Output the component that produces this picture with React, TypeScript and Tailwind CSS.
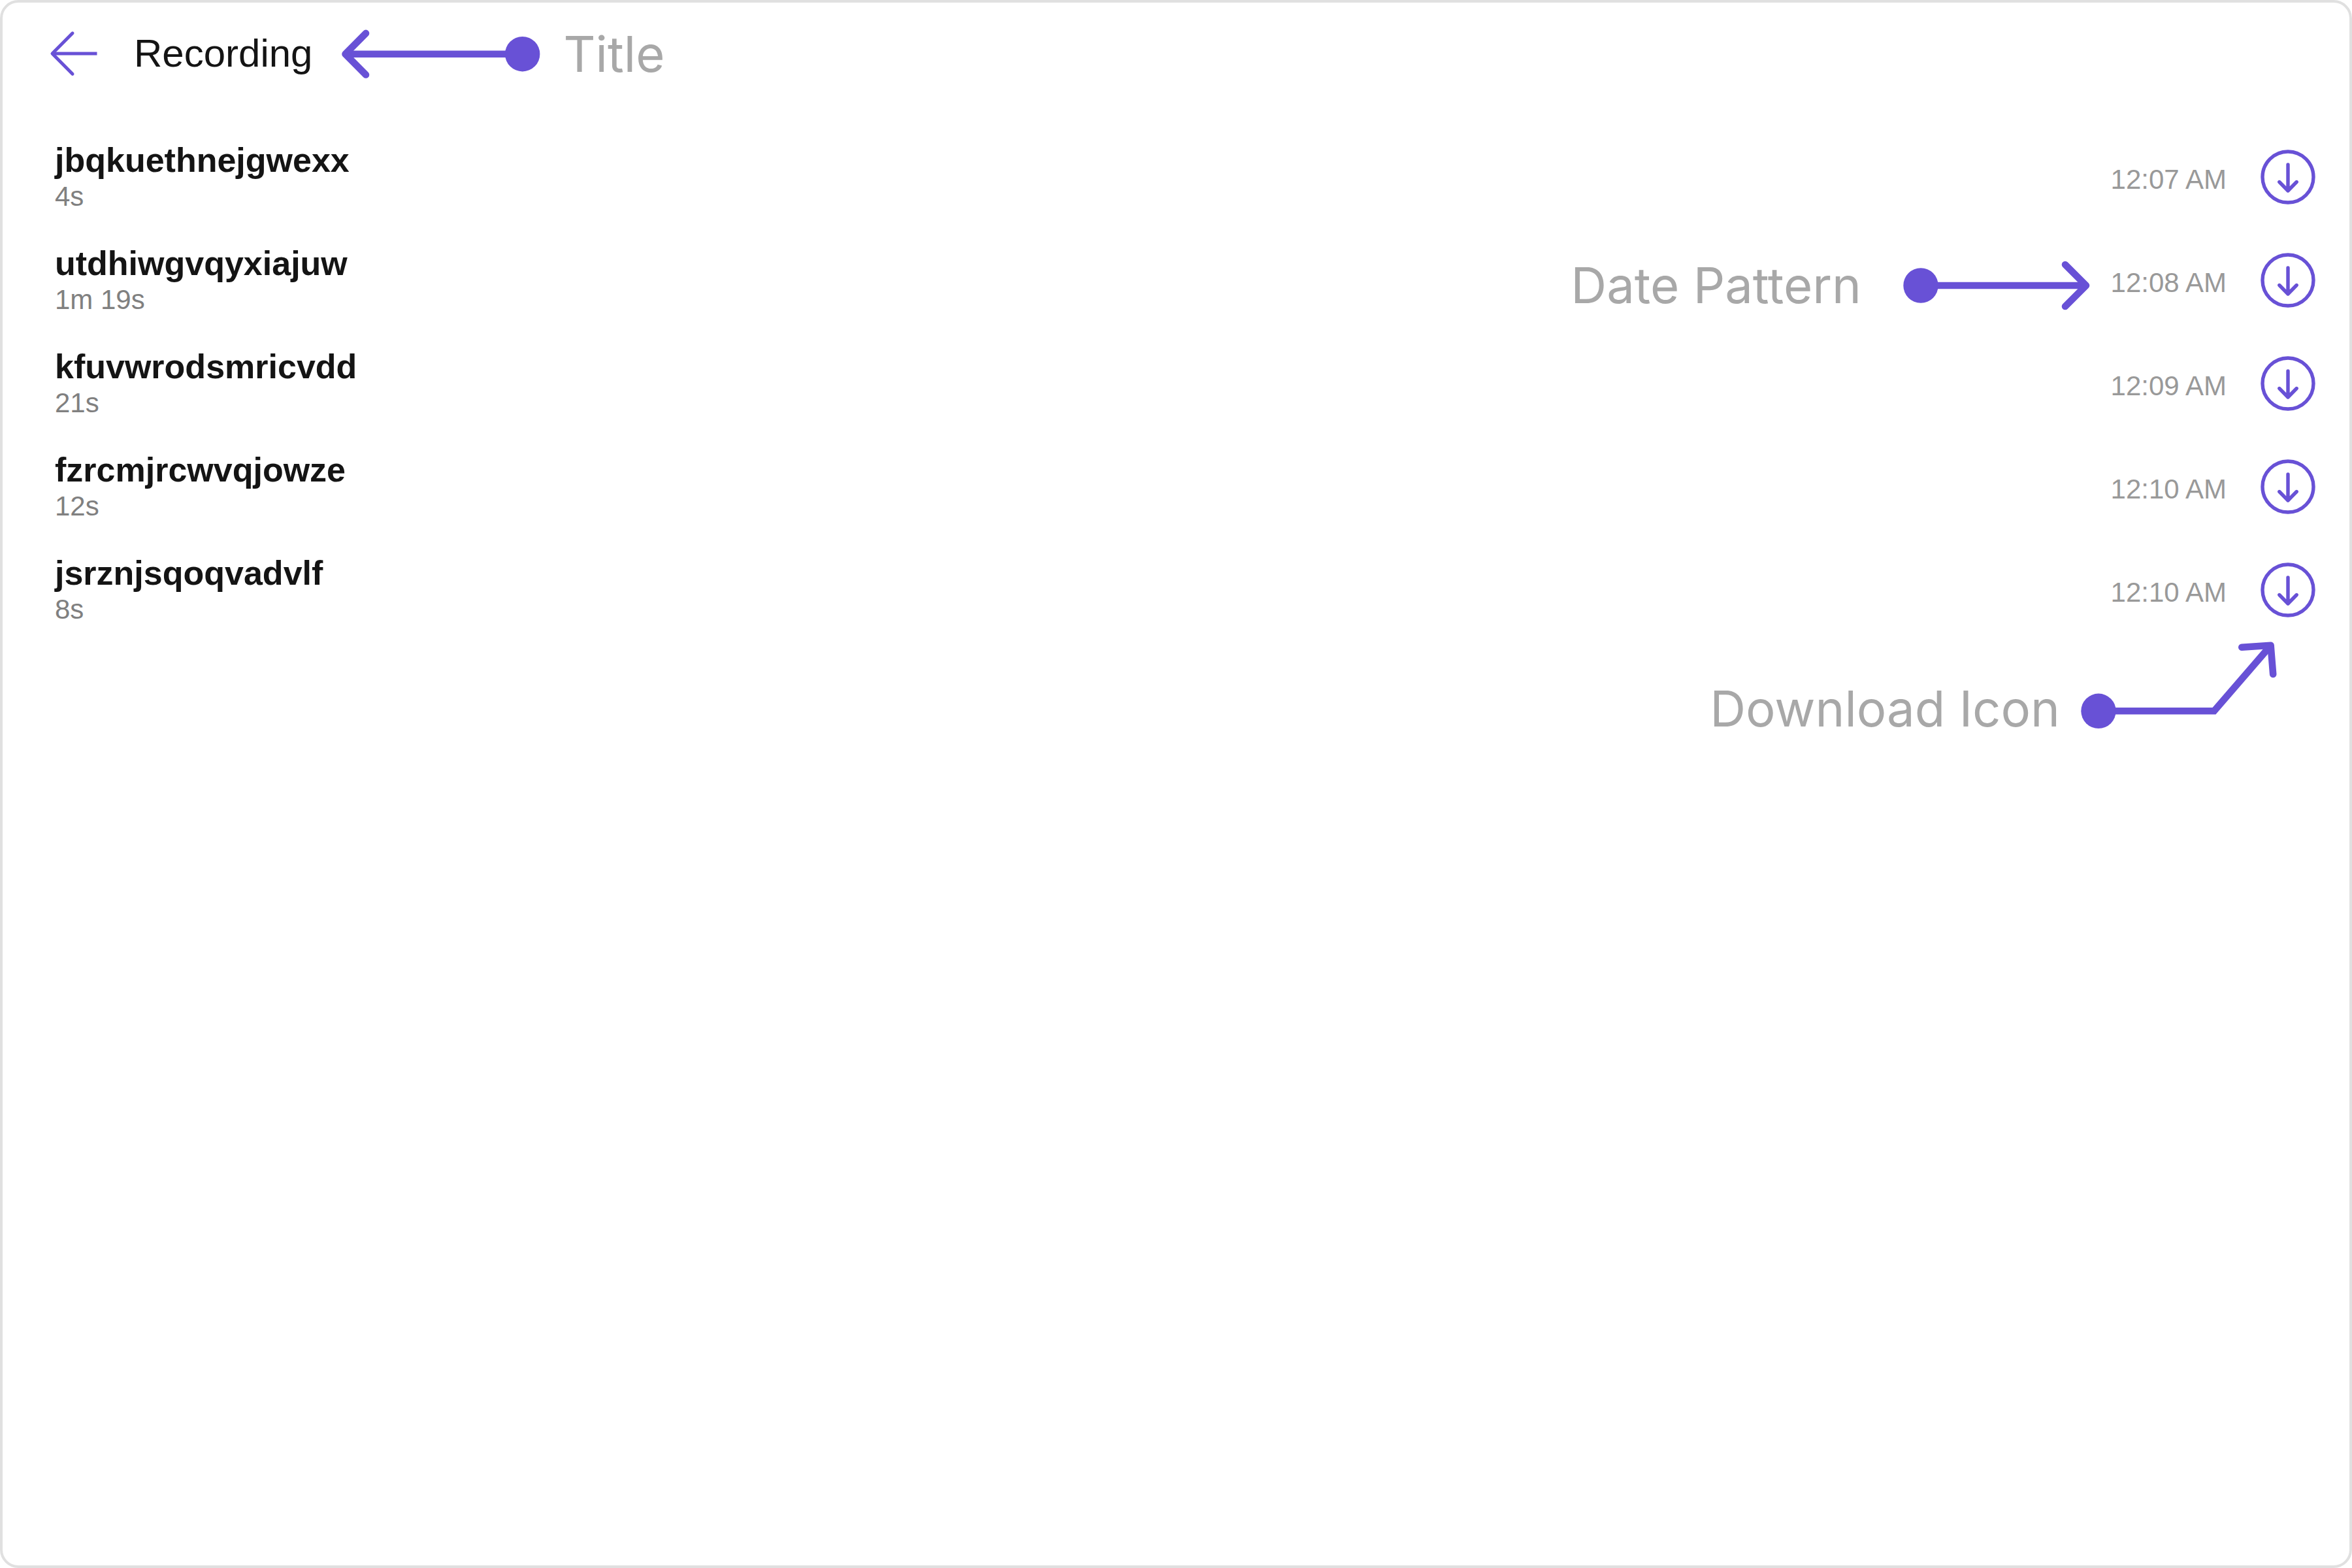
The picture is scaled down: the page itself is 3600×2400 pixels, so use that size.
import React from "react";

type Recording = { id: string; duration: string; time: string };

const recordings: Recording[] = [
  { id: "jbqkuethnejgwexx", duration: "4s", time: "12:07 AM" },
  { id: "utdhiwgvqyxiajuw", duration: "1m 19s", time: "12:08 AM" },
  { id: "kfuvwrodsmricvdd", duration: "21s", time: "12:09 AM" },
  { id: "fzrcmjrcwvqjowze", duration: "12s", time: "12:10 AM" },
  { id: "jsrznjsqoqvadvlf", duration: "8s", time: "12:10 AM" },
];

function BackIcon() {
  return (
    <svg width="74" height="72" viewBox="0 0 74 72" fill="none" stroke="#6851d6" strokeWidth="5" aria-hidden="true">
      <path d="M72.5 36H4" />
      <path d="M35 4.8L4 36L35 67.2" strokeLinecap="round" strokeLinejoin="round" />
    </svg>
  );
}

function DownloadIcon() {
  return (
    <svg
      width="84"
      height="84"
      viewBox="0 0 84 84"
      fill="none"
      stroke="#6851d6"
      strokeWidth="5.4"
      strokeLinecap="round"
      strokeLinejoin="round"
      aria-hidden="true"
    >
      <circle cx="42" cy="42" r="39" />
      <path d="M42 23V63M28.8 49.5L42 63L55.2 49.5" />
    </svg>
  );
}

function Callout({ children }: { children: React.ReactNode }) {
  return (
    <span className="font-[Inter,sans-serif] text-[76px] leading-[92px] whitespace-nowrap text-[#a8a8a8]">
      {children}
    </span>
  );
}

function TitleArrow() {
  return (
    <svg width="304" height="76" viewBox="0 0 304 76" fill="none" stroke="#6851d6" strokeWidth="10.6" aria-hidden="true">
      <path d="M5.5 38.7H277" />
      <path d="M37 6.9L5.5 38.7L37 70.5" strokeLinecap="round" strokeLinejoin="round" />
      <circle cx="276.7" cy="38.7" r="26.7" fill="#6851d6" stroke="none" />
    </svg>
  );
}

function DateArrow() {
  return (
    <svg width="286" height="78" viewBox="0 0 286 78" fill="none" stroke="#6851d6" strokeWidth="10.6" aria-hidden="true">
      <path d="M27 40H280" />
      <path d="M248 8L280 40L248 72" strokeLinecap="round" strokeLinejoin="round" />
      <circle cx="27" cy="40" r="26.7" fill="#6851d6" stroke="none" />
    </svg>
  );
}

function DownloadArrow() {
  return (
    <svg width="300" height="148" viewBox="0 0 300 148" fill="none" stroke="#6851d6" strokeWidth="10.6" aria-hidden="true">
      <path d="M27 106.3H204L290.6 6" />
      <path d="M246.3 8.8L290.6 5.8L294.2 50" strokeLinecap="round" strokeLinejoin="round" />
      <circle cx="27" cy="106.3" r="26.7" fill="#6851d6" stroke="none" />
    </svg>
  );
}

export default function App() {
  return (
    <main className="min-h-screen rounded-[28px] border-4 border-[#e0e0e0] bg-white font-['Liberation_Sans',Arial,sans-serif]">
      <header className="flex h-[156px] items-center pl-[72px]">
        <button type="button" aria-label="Back">
          <BackIcon />
        </button>
        <h1 className="ml-[55px] text-[60px] leading-[72px] text-[#141414]">Recording</h1>
        <div className="ml-11 flex items-center gap-9">
          <TitleArrow />
          <Callout>Title</Callout>
        </div>
      </header>

      <ul className="pt-8">
        {recordings.map((r, i) => (
          <li key={r.id} className="relative flex h-[158px] items-center justify-between pr-[52px] pl-[80px]">
            <div>
              <p className="text-[52px] leading-[60px] font-bold text-[#141414]">{r.id}</p>
              <p className="text-[42px] leading-[52px] text-[#808080]">{r.duration}</p>
            </div>
            <div className="flex items-center gap-[52px]">
              <time className="pt-2 text-[42px] leading-[48px] text-[#999999]">{r.time}</time>
              <button type="button" aria-label={`Download ${r.id}`}>
                <DownloadIcon />
              </button>
            </div>
            {i === 1 && (
              <div className="absolute top-10 right-[397px] flex items-center gap-16">
                <Callout>Date Pattern</Callout>
                <DateArrow />
              </div>
            )}
          </li>
        ))}
      </ul>

      <div className="flex items-end justify-end gap-8 pr-[111px]">
        <Callout>Download Icon</Callout>
        <DownloadArrow />
      </div>
    </main>
  );
}
